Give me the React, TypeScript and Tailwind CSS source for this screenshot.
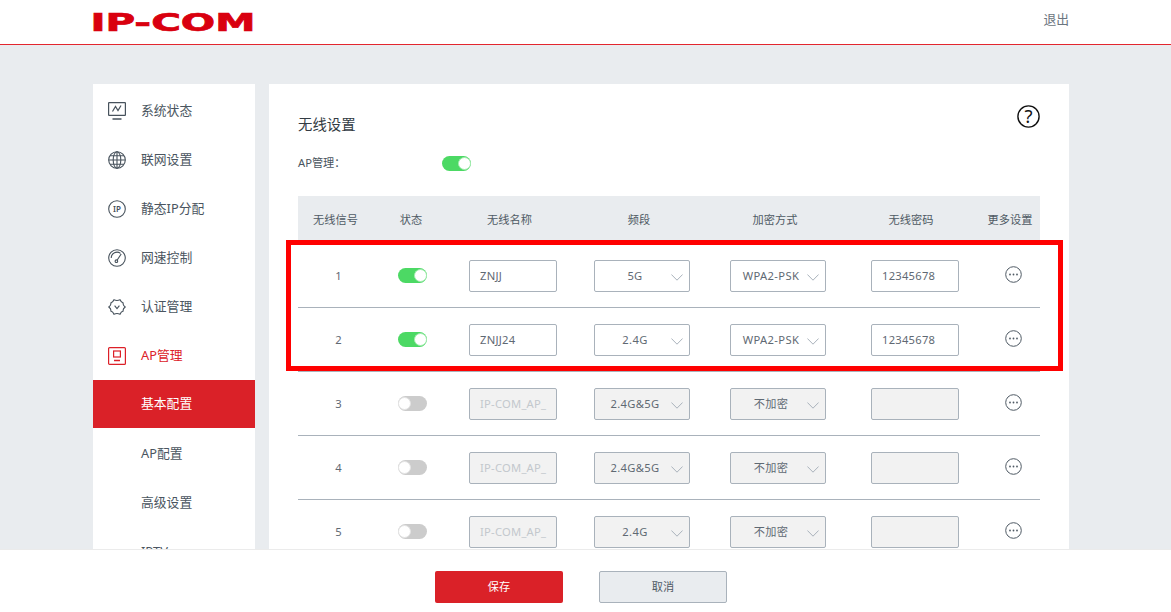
import type { ReactNode } from "react";

const FONT = "font-['Noto_Sans','Noto_Sans_CJK_SC',sans-serif]";

function Toggle({ on }: { on: boolean }) {
  return on ? (
    <span className="flex h-[15px] w-[29px] items-center justify-end rounded-full bg-[#4cd964]">
      <span className="box-content h-[11px] w-[11px] rounded-full border border-[#a5ecb1] bg-white" />
    </span>
  ) : (
    <span className="flex h-[15px] w-[29px] items-center justify-start rounded-full bg-[#cccccc]">
      <span className="box-content h-[11px] w-[11px] rounded-full border border-[#e4e4e4] bg-white" />
    </span>
  );
}

function Chevron() {
  return (
    <svg width="12" height="7" viewBox="0 0 12 7" fill="none" className="absolute right-[6px] top-[13px]">
      <path d="M0.4 0.5 L6 6.2 L11.6 0.5" stroke="#a9b2bb" strokeWidth="1" />
    </svg>
  );
}

function Select({ value, disabled, width }: { value: string; disabled: boolean; width: string }) {
  return (
    <div
      className={`relative flex h-8 items-center rounded-[2px] border border-[#a9b2bb] ${width} ${
        disabled ? "bg-[#f2f2f2]" : "bg-white"
      }`}
    >
      <span className="w-[80px] text-center text-[11.2px] tracking-[0.35px] text-[#5f6973]">{value}</span>
      <Chevron />
    </div>
  );
}

function TextBox({ value, disabled }: { value: string; disabled: boolean }) {
  return (
    <div
      className={`flex h-8 w-[88px] items-center rounded-[2px] border border-[#a9b2bb] pl-[10px] text-[11.2px] tracking-[0.25px] ${
        disabled ? "bg-[#f2f2f2] text-[#c3c8cd]" : "bg-white text-[#5f6973]"
      }`}
    >
      {value}
    </div>
  );
}

function MoreIcon() {
  return (
    <svg width="17" height="17" viewBox="0 0 17 17" fill="none" className="mb-[3px]">
      <circle cx="8.5" cy="8.5" r="7.8" stroke="#4f5a64" strokeWidth="1" />
      <circle cx="5" cy="8.5" r="0.9" fill="#4f5a64" />
      <circle cx="8.5" cy="8.5" r="0.9" fill="#4f5a64" />
      <circle cx="12" cy="8.5" r="0.9" fill="#4f5a64" />
    </svg>
  );
}

const MonitorIcon = (
  <svg width="18" height="18" viewBox="0 0 18 18" fill="none" stroke="#47525c" strokeWidth="1.2">
    <rect x="0.6" y="0.6" width="16.8" height="12.8" rx="0.5" />
    <path d="M4.5 9.5 L7.5 4.5 L10 8.5 L13 3.5" />
    <path d="M4.5 17 H13.5" strokeWidth="1.5" />
  </svg>
);

const GlobeIcon = (
  <svg width="18" height="18" viewBox="0 0 18 18" fill="none" stroke="#47525c" strokeWidth="1.1">
    <circle cx="9" cy="9" r="8.3" />
    <ellipse cx="9" cy="9" rx="3.8" ry="8.3" />
    <path d="M9 0.7 V17.3 M0.7 9 H17.3 M2 4.8 H16 M2 13.2 H16" />
  </svg>
);

const IpIcon = (
  <svg width="18" height="18" viewBox="0 0 18 18" fill="none">
    <circle cx="9" cy="9" r="8.3" stroke="#47525c" strokeWidth="1.1" />
    <text x="9" y="11.8" textAnchor="middle" fontSize="8" fontWeight="600" fill="#47525c" fontFamily="Noto Sans">
      IP
    </text>
  </svg>
);

const GaugeIcon = (
  <svg width="18" height="18" viewBox="0 0 18 18" fill="none" stroke="#47525c" strokeWidth="1.1">
    <circle cx="9" cy="9" r="8.3" />
    <path d="M3.2 9 A5.8 5.8 0 0 1 12.5 4.4" />
    <path d="M13.2 5 L9.2 11" />
    <circle cx="8.4" cy="12.2" r="1.3" />
  </svg>
);

const BadgeIcon = (
  <svg width="18" height="18" viewBox="0 0 18 18" fill="none" stroke="#47525c" strokeWidth="1.1">
    <path d="M6 1.8 Q9 3.2 12 1.8 Q13 4.2 15.2 5 Q14.6 7 17.2 9 Q14.6 11 15.2 13 Q13 13.8 12 16.2 Q9 14.8 6 16.2 Q5 13.8 2.8 13 Q3.4 11 0.8 9 Q3.4 7 2.8 5 Q5 4.2 6 1.8 Z" />
    <path d="M6.6 7.6 L9 10.6 L11.4 7.6" />
  </svg>
);

const ApIcon = (
  <svg width="18" height="18" viewBox="0 0 18 18" fill="none" stroke="#dc2028" strokeWidth="1.2">
    <rect x="0.6" y="0.6" width="16.8" height="16.8" rx="1" />
    <rect x="5.6" y="4" width="6.8" height="6" />
    <path d="M6 13.5 H12" strokeWidth="1.5" />
  </svg>
);

type NavItem = { label: string; icon?: ReactNode; state?: "open" | "active" };

const NAV: NavItem[] = [
  { label: "系统状态", icon: MonitorIcon },
  { label: "联网设置", icon: GlobeIcon },
  { label: "静态IP分配", icon: IpIcon },
  { label: "网速控制", icon: GaugeIcon },
  { label: "认证管理", icon: BadgeIcon },
  { label: "AP管理", icon: ApIcon, state: "open" },
  { label: "基本配置", state: "active" },
  { label: "AP配置" },
  { label: "高级设置" },
  { label: "IPTV" },
];

const HEADERS = ["无线信号", "状态", "无线名称", "频段", "加密方式", "无线密码", "更多设置"];

type Row = { n: number; on: boolean; name: string; band: string; enc: string; pwd: string };

const ROWS: Row[] = [
  { n: 1, on: true, name: "ZNJJ", band: "5G", enc: "WPA2-PSK", pwd: "12345678" },
  { n: 2, on: true, name: "ZNJJ24", band: "2.4G", enc: "WPA2-PSK", pwd: "12345678" },
  { n: 3, on: false, name: "IP-COM_AP_", band: "2.4G&5G", enc: "不加密", pwd: "" },
  { n: 4, on: false, name: "IP-COM_AP_", band: "2.4G&5G", enc: "不加密", pwd: "" },
  { n: 5, on: false, name: "IP-COM_AP_", band: "2.4G", enc: "不加密", pwd: "" },
];

export default function App() {
  return (
    <div className={`flex h-[612px] w-[1171px] flex-col overflow-hidden bg-[#e9ecef] ${FONT}`}>
      {/* top bar */}
      <header className="flex h-[45px] shrink-0 items-start justify-between border-b border-[#e3262e] bg-white pl-[93px] pr-[102px]">
        <svg width="159" height="18" viewBox="0 0 159 18" className="mt-[13px] overflow-visible">
          <text
            x="-2.6"
            y="17.7"
            textLength="165"
            lengthAdjust="spacingAndGlyphs"
            fontFamily="DejaVu Sans"
            fontWeight="700"
            fontSize="24"
            fill="#d9000f"
            stroke="#d9000f"
            strokeWidth="0.7"
          >
            IP-COM
          </text>
        </svg>
        <button className="mt-[10px] text-[12.8px] text-[#6b7580]">退出</button>
      </header>

      <div className="flex min-h-0 flex-1 gap-[14px] pl-[93px] pt-[39px]">
        {/* side menu */}
        <nav className="h-[600px] w-[162px] shrink-0 bg-white pt-[2px]">
          {NAV.map((item) => (
            <div
              key={item.label}
              className={`flex items-center text-[12.8px] ${
                item.state === "active"
                  ? "mb-px h-12 bg-[#da2128] text-white"
                  : item.state === "open"
                    ? "h-[49px] text-[#dc2128]"
                    : "h-[49px] text-[#4a5560]"
              }`}
            >
              <span className="flex w-[48px] justify-end pr-[15px]">{item.icon}</span>
              {item.label}
            </div>
          ))}
        </nav>

        {/* wireless settings */}
        <main className="relative h-[800px] w-[800px] shrink-0 bg-white px-[29px] pt-[21px]">
          <div className="flex h-10 items-center justify-between">
            <h1 className="text-[14.4px] font-normal text-[#333b43]">无线设置</h1>
            <svg width="23" height="23" viewBox="0 0 23 23" fill="none" className="mb-[17px] overflow-visible">
              <circle cx="11.5" cy="11.5" r="10.6" stroke="#111" strokeWidth="1.4" />
              <text x="11.5" y="18.2" textAnchor="middle" fontSize="18.5" fill="#111" fontFamily="Noto Sans">
                ?
              </text>
            </svg>
          </div>

          <div className="flex h-9 items-center pt-px text-[11.2px] text-[#4a5560]">
            <span className="w-[144px]">AP管理：</span>
            <Toggle on />
          </div>

          <div className="mt-[15px] grid h-12 grid-cols-[75px_76px_121px_138px_134px_138px_60px] items-center bg-[#e9ecef] text-center text-[11.2px] text-[#4f5a64]">
            {HEADERS.map((h) => (
              <span key={h}>{h}</span>
            ))}
          </div>

          {ROWS.map((r) => {
            const off = !r.on;
            return (
              <div
                key={r.n}
                className="grid h-16 grid-cols-[75px_73px_128px_130px_142px_132px_64px] items-center justify-items-center border-b border-[#a9b2bb] pl-[3px] pt-px text-[11.2px] text-[#5f6973]"
              >
                <span>{r.n}</span>
                <span className="mb-px">
                  <Toggle on={r.on} />
                </span>
                <TextBox value={r.name} disabled={off} />
                <Select value={r.band} disabled={off} width="w-[96px]" />
                <Select value={r.enc} disabled={off} width="w-[96px]" />
                <TextBox value={r.pwd} disabled={off} />
                <MoreIcon />
              </div>
            );
          })}

          {/* highlight drawn over the first two rows */}
          <div className="absolute left-[17px] top-[156px] h-[131px] w-[777px] border-[5px] border-[#ff0000]" />
        </main>
      </div>

      {/* action bar */}
      <footer className="relative z-10 flex h-[63px] shrink-0 justify-center gap-9 border-t border-[#ebebeb] bg-white pr-[9px] pt-[21px]">
        <button className="h-8 w-32 rounded-[2px] bg-[#da2128] text-[11.2px] text-white">保存</button>
        <button className="h-8 w-32 rounded-[2px] border border-[#a9b2bb] bg-[#e9ecef] text-[11.2px] text-[#4f5a64]">
          取消
        </button>
      </footer>
    </div>
  );
}
